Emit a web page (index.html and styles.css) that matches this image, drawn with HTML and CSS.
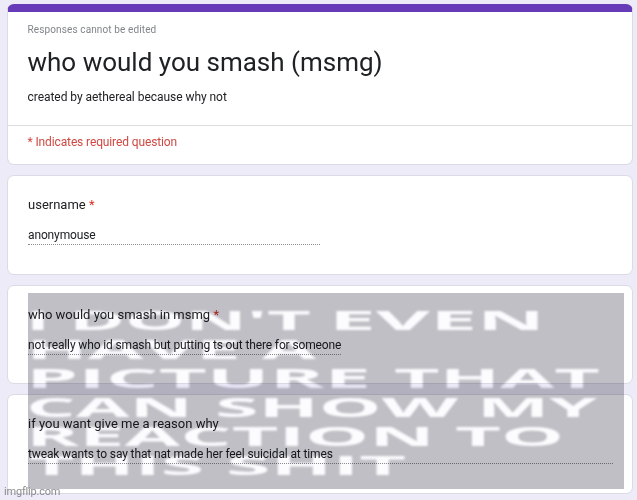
FILE: index.html
```
<!DOCTYPE html>
<html lang="en">
<head>
  <meta charset="UTF-8">
  <meta name="viewport" content="width=device-width, initial-scale=1.0">
  <title>who would you smash (msmg)</title>
  <link rel="stylesheet" href="styles.css">
</head>
<body>
  <main class="form">
    <!-- Header -->
    <header class="card form-header">
      <div class="intro">
        <p class="notice">Responses cannot be edited</p>
        <h1>who would you smash (msmg)</h1>
        <p class="description">created by aethereal because why not</p>
      </div>
      <p class="required-note">* Indicates required question</p>
    </header>

    <!-- Questions -->
    <section class="card">
      <h2>username <span class="star">*</span></h2>
      <p class="answer half">anonymouse</p>
    </section>
    <section class="card">
      <h2>who would you smash in msmg <span class="star">*</span></h2>
      <p class="answer fit">not really who id smash but putting ts out there for someone</p>
    </section>
    <section class="card">
      <h2>if you want give me a reason why</h2>
      <p class="answer">tweak wants to say that nat made her feel suicidal at times</p>
    </section>
  </main>

  <!-- Caption laid over the form, one text per word -->
  <svg class="caption" width="596" height="196" viewBox="0 0 596 196">
    <rect class="caption-bg" width="596" height="196"/>
    <g class="caption-text">
      <text x="-2" y="37" textLength="24" lengthAdjust="spacingAndGlyphs">I</text>
      <text x="41" y="37" textLength="242" lengthAdjust="spacingAndGlyphs">DON'T</text>
      <text x="301" y="37" textLength="216" lengthAdjust="spacingAndGlyphs">EVEN</text>
      <text x="-2" y="66" textLength="215" lengthAdjust="spacingAndGlyphs">HAVE</text>
      <text x="234" y="66" textLength="54" lengthAdjust="spacingAndGlyphs">A</text>
      <text x="-2" y="95" textLength="345" lengthAdjust="spacingAndGlyphs">PICTURE</text>
      <text x="366" y="95" textLength="206" lengthAdjust="spacingAndGlyphs">THAT</text>
      <text x="-2" y="124" textLength="167" lengthAdjust="spacingAndGlyphs">CAN</text>
      <text x="187" y="124" textLength="243" lengthAdjust="spacingAndGlyphs">SHOW</text>
      <text x="449" y="124" textLength="120" lengthAdjust="spacingAndGlyphs">MY</text>
      <text x="-2" y="153" textLength="409" lengthAdjust="spacingAndGlyphs">REACTION</text>
      <text x="427" y="153" textLength="109" lengthAdjust="spacingAndGlyphs">TO</text>
      <text x="1" y="182" textLength="175" lengthAdjust="spacingAndGlyphs">THIS</text>
      <text x="198" y="182" textLength="180" lengthAdjust="spacingAndGlyphs">SHIT</text>
    </g>
  </svg>
  <div class="watermark">imgflip.com</div>
</body>
</html>
```
FILE: styles.css
```
* {
  box-sizing: border-box;
}

body {
  margin: 0;
  height: 500px;
  overflow: hidden;
  position: relative;
  background: #eeebf8;
  color: #202124;
  font-family: Roboto, Arial, sans-serif;
}

h1, h2, p {
  margin: 0;
  font-weight: 400;
  white-space: nowrap;
}

.form {
  display: flex;
  flex-direction: column;
  gap: 10px;
  padding: 4px 4px 0 7px;
}

.card {
  height: 99.6px;
  padding: 20px 19px 0 20px;
  background: #fff;
  border: 1px solid #dddae6;
  border-radius: 7px;
}

.form-header {
  height: 161px;
  padding: 0;
  border-top: 8px solid #673ab7;
}

.intro {
  height: 114px;
  padding: 10px 20px 0 19.5px;
  border-bottom: 1px solid #dadce0;
}

.notice {
  color: #80848a;
  font-size: 10px;
  line-height: 15px;
  letter-spacing: 0.12px;
}

h1 {
  margin-top: 7px;
  font-size: 26px;
  line-height: 36px;
}

.description {
  margin-top: 9px;
  font-size: 12px;
  line-height: 16px;
  letter-spacing: -0.04px;
}

.required-note {
  padding: 8px 20px 8px 19.5px;
  color: #d04842;
  font-size: 12px;
  line-height: 16px;
  letter-spacing: -0.12px;
}

h2 {
  font-size: 13px;
  line-height: 18px;
}

.star {
  color: #d93025;
}

.answer {
  height: 20px;
  margin-top: 11px;
  border-bottom: 1px dotted #8d8d91;
  font-size: 12px;
  line-height: 20px;
  letter-spacing: -0.13px;
}

.half {
  width: 292px;
}

.fit {
  width: 313px;
}

/* white lettering on a gray sheet, the form shows through */
.caption {
  position: absolute;
  left: 28px;
  top: 293px;
  overflow: visible;
  mix-blend-mode: multiply;
}

.caption-bg {
  fill: #bfbfc5;
}

.caption-text {
  fill: #fcfcff;
  font-family: "Open Sans", sans-serif;
  font-size: 26px;
  font-weight: 700;
  filter: blur(0.8px);
}

.watermark {
  position: absolute;
  left: 4px;
  top: 485px;
  color: #8b8b8f;
  font-size: 11px;
  line-height: 14px;
  letter-spacing: -0.2px;
}
```
